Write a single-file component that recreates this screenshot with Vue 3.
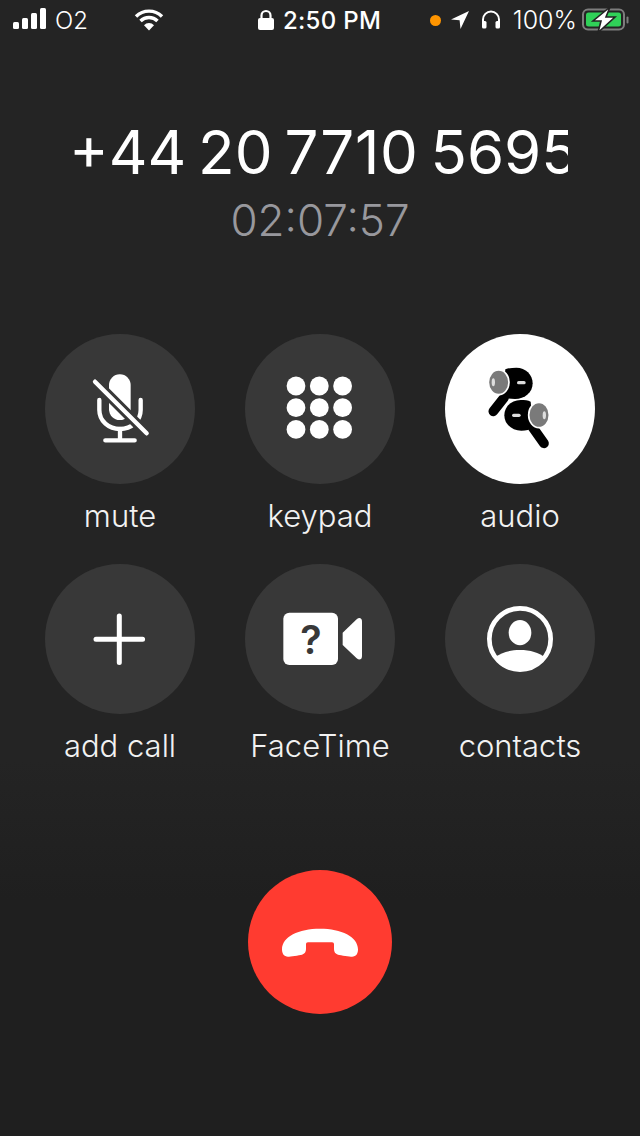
<template>
  <div class="phone">
    <div class="status">
      <div class="status-left">
        <svg class="bars" width="34" height="24" viewBox="0 0 34 24">
          <rect x="0" y="14" width="6" height="7" rx="1.5" />
          <rect x="9" y="10" width="6" height="11" rx="1.5" />
          <rect x="18" y="5" width="6" height="16" rx="1.5" />
          <rect x="27" y="0" width="6" height="21" rx="1.5" />
        </svg>
        <span class="carrier">O2</span>
        <svg class="wifi" width="30" height="24" viewBox="0 0 30 24">
          <path d="M2 8.5a18.5 18.5 0 0 1 26 0M6.5 13a12 12 0 0 1 17 0" fill="none" stroke="#fff" stroke-width="3.4" />
          <path d="M10 17.2a7 7 0 0 1 10 0L15 22.5z" fill="#fff" />
        </svg>
      </div>
      <div class="status-center">
        <svg width="18" height="22" viewBox="0 0 18 22">
          <rect x="1" y="9" width="16" height="12" rx="2" fill="#fff" />
          <path d="M4.5 10V6.5a4.5 4.5 0 0 1 9 0V10" fill="none" stroke="#fff" stroke-width="2.2" />
        </svg>
        <span>2:50 PM</span>
      </div>
      <div class="status-right">
        <span class="dot"></span>
        <svg class="arrow" width="20" height="20" viewBox="0 0 20 20">
          <path d="M19 1 1 9.5l8.6.8.9 8.7z" fill="#fff" />
        </svg>
        <svg class="phones" width="20" height="20" viewBox="0 0 20 20">
          <path d="M2 14V9.5a8 8 0 0 1 16 0V14" fill="none" stroke="#fff" stroke-width="2" />
          <rect x="1" y="11" width="4.5" height="7.5" rx="1.5" fill="#fff" />
          <rect x="14.5" y="11" width="4.5" height="7.5" rx="1.5" fill="#fff" />
        </svg>
        <span class="pct">100%</span>
        <svg class="battery" width="48" height="28" viewBox="0 0 48 28">
          <rect x="1" y="3.5" width="41" height="20" rx="5" fill="none" stroke="#7d7d7d" stroke-width="2" />
          <rect x="4" y="6.5" width="35" height="14" rx="2.5" fill="#30d158" />
          <rect x="44.5" y="10.5" width="2" height="7" rx="1" fill="#7d7d7d" />
          <path d="M28 1 11 15h8l-3 11.5L33 11h-9z" fill="#fff" stroke="#232323" stroke-width="1.6" />
        </svg>
      </div>
    </div>

    <div class="number"><span class="digits">+44 20 <span class="wide">7710</span> 5695</span></div>
    <div class="timer">02:07:57</div>

    <div class="grid">
      <div class="item">
        <div class="circle">
          <svg viewBox="15 12 450 450" width="150" height="150">
            <rect x="207" y="133" width="65" height="137" rx="32" fill="#fff" />
            <path d="M178 210v30c0 33 28 57 62 57s62-24 62-57v-30" fill="none" stroke="#fff" stroke-width="13" stroke-linecap="round" />
            <path d="M240 297v34M196 331h88" fill="none" stroke="#fff" stroke-width="13" stroke-linecap="round" />
            <path d="M165 155 320 310" stroke="#383838" stroke-width="31" />
            <path d="M165 155 320 310" stroke="#fff" stroke-width="13" stroke-linecap="round" />
          </svg>
        </div>
        <span class="label">mute</span>
      </div>
      <div class="item">
        <div class="circle">
          <svg viewBox="0 0 150 150" width="150" height="150">
            <g fill="#fff">
              <circle v-for="d in keypadDots" :key="d.id" :cx="d.x" :cy="d.y" r="9.4" />
            </g>
          </svg>
        </div>
        <span class="label">keypad</span>
      </div>
      <div class="item">
        <div class="circle active">
          <svg viewBox="15 12 450 450" width="150" height="150">
            <path d="M192 203 160 244" stroke="#000" stroke-width="29" stroke-linecap="round" />
            <path d="M196 118c10-4 22-5 33-5 28 0 49 21 49 47 0 28-24 47-53 47-12 0-25-1-35-5z" fill="#000" />
            <ellipse cx="176" cy="157" rx="31" ry="37" fill="#7a7a7a" stroke="#fff" stroke-width="5" />
            <ellipse cx="160" cy="157" rx="5" ry="12" fill="#ddd" />
            <rect x="231" y="153" width="26" height="10" rx="5" fill="#ddd" />
            <path d="M278 292 312 340" stroke="#000" stroke-width="29" stroke-linecap="round" />
            <path d="M272 215c-8-4-18-5-30-5-28 0-49 20-49 46 0 28 24 46 51 46 14 0 26-3 36-8z" fill="#000" />
            <ellipse cx="297" cy="255" rx="31" ry="38" fill="#7a7a7a" stroke="#fff" stroke-width="5" />
            <ellipse cx="313" cy="256" rx="5" ry="12" fill="#ddd" />
            <rect x="216" y="251" width="26" height="10" rx="5" fill="#ddd" />
          </svg>
        </div>
        <span class="label">audio</span>
      </div>
      <div class="item">
        <div class="circle">
          <svg viewBox="0 0 150 150" width="150" height="150">
            <path d="M74.3 52v46.6M51 75.3h46.6" stroke="#fff" stroke-width="5" stroke-linecap="round" />
          </svg>
        </div>
        <span class="label">add call</span>
      </div>
      <div class="item">
        <div class="circle">
          <svg viewBox="15 12 450 450" width="150" height="150">
            <rect x="130" y="158" width="164" height="157" rx="18" fill="#fff" />
            <path d="M308 218 350 178c8-7 16-4 16 7v103c0 11-8 14-16 7l-42-40z" fill="#fff" />
            <text x="213" y="281" text-anchor="middle" class="qmark">?</text>
          </svg>
        </div>
        <span class="label">FaceTime</span>
      </div>
      <div class="item">
        <div class="circle">
          <svg viewBox="15 12 450 450" width="150" height="150">
            <circle cx="240" cy="237" r="92" fill="none" stroke="#fff" stroke-width="14" />
            <ellipse cx="240" cy="218" rx="34" ry="38" fill="#fff" />
            <path d="M166 292c16-14 44-22 74-22s58 8 74 22a92 92 0 0 1-148 0z" fill="#fff" />
          </svg>
        </div>
        <span class="label">contacts</span>
      </div>
    </div>

    <div class="end-call">
      <svg viewBox="24 30 432 432" width="144" height="144">
        <path d="M126 268c0-38 50-62 114-62s114 24 114 62c0 14-6 22-18 22-6 0-34-4-42-6-8-2-12-8-12-16v-14c0-5-2-7-6-7h-72c-4 0-6 2-6 7v14c0 8-4 14-12 16-8 2-36 6-42 6-12 0-18-8-18-22z" fill="#fff" />
      </svg>
    </div>
  </div>
</template>

<script setup>
// 3x3 keypad dots, inside the 150px circle
const keypadDots = [];
for (let row = 0; row < 3; row++) {
  for (let col = 0; col < 3; col++) {
    keypadDots.push({ id: row * 3 + col, x: 51 + col * 23.3, y: 52 + row * 21.7 });
  }
}
</script>

<style>
html,
body {
  margin: 0;
  background: #1f1f1f;
}
</style>

<style scoped>
.phone {
  width: 640px;
  height: 1136px;
  overflow: hidden;
  display: flex;
  flex-direction: column;
  align-items: center;
  background: linear-gradient(#242424 0, #242424 760px, #1f1f1f 900px);
  color: #fff;
  font-family: Inter, "Liberation Sans", sans-serif;
}

.status {
  width: 100%;
  height: 40px;
  display: grid;
  grid-template-columns: 1fr auto 1fr;
  align-items: center;
  font-size: 24px;
  box-sizing: border-box;
  padding: 0 10px 0 13px;
}

.status-left,
.status-center,
.status-right {
  display: flex;
  align-items: center;
}

.status-left .carrier {
  margin-left: 8px;
  font-weight: 300;
}

.bars {
  fill: #fff;
}

.wifi {
  margin-left: 46px;
}

.status-center {
  gap: 8px;
  font-weight: 500;
  letter-spacing: 0.3px;
  margin-left: -5px;
}

.status-right {
  justify-content: flex-end;
}

.dot {
  width: 11px;
  height: 11px;
  border-radius: 50%;
  background: #ff9500;
  margin-right: 9px;
}

.phones {
  margin-left: 11px;
}

.pct {
  margin-left: 12px;
  font-size: 25px;
  font-weight: 300;
}

.battery {
  margin-left: 5px;
}

.number {
  margin-top: 77px;
  width: 496px;
  overflow: hidden;
  white-space: nowrap;
  font-size: 60px;
  line-height: 70px;
  font-weight: 375;
  word-spacing: -5px;
}

.digits {
  margin-left: -3px;
}

.wide {
  letter-spacing: 0.7px;
}

.timer {
  margin-top: 6px;
  font-size: 44px;
  line-height: 54px;
  font-weight: 350;
  color: #98989d;
}

.grid {
  margin-top: 87px;
  display: grid;
  grid-template-columns: repeat(3, 150px);
  column-gap: 50px;
  row-gap: 30px;
}

.item {
  display: flex;
  flex-direction: column;
  align-items: center;
}

.circle {
  width: 150px;
  height: 150px;
  border-radius: 50%;
  background: #383838;
}

.circle svg {
  display: block;
}

.circle.active {
  background: #fff;
}

.label {
  height: 50px;
  line-height: 64px;
  white-space: nowrap;
  font-size: 31px;
  font-weight: 300;
  color: #f2f2f2;
}

.qmark {
  font-family: Inter, "Liberation Sans", sans-serif;
  font-size: 118px;
  font-weight: 600;
  fill: #383838;
}

.end-call {
  margin-top: 106px;
  width: 144px;
  height: 144px;
  border-radius: 50%;
  background: #ff3b30;
}

.end-call svg {
  display: block;
}
</style>
